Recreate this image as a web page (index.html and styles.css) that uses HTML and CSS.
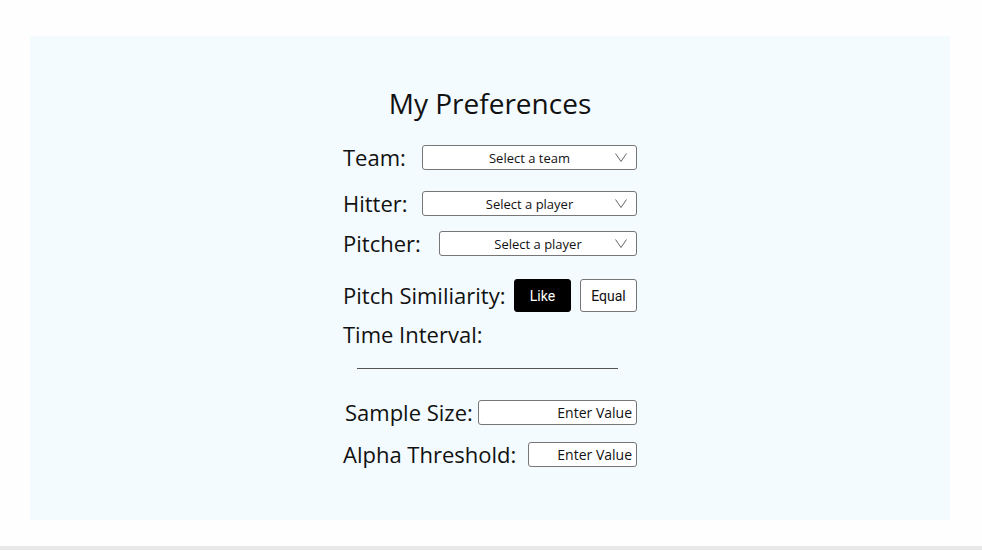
FILE: index.html
```html
<!DOCTYPE html>
<html>
<head>
<meta charset="utf-8">
<link rel="stylesheet" href="styles.css">
</head>
<body>
<div class="panel">
  <div class="form">
    <h1 class="title">My Preferences</h1>
    <div class="row row-team">
      <span class="label">Team:</span>
      <div class="select w-team"><span class="select-text">Select a team</span><svg class="chev" width="12" height="9" viewBox="0 0 12 9"><path d="M0.5 0.5 L6 8.5 L11.5 0.5" fill="none" stroke="#666" stroke-width="1"/></svg></div>
    </div>
    <div class="row row-hitter">
      <span class="label">Hitter:</span>
      <div class="select w-team"><span class="select-text">Select a player</span><svg class="chev" width="12" height="9" viewBox="0 0 12 9"><path d="M0.5 0.5 L6 8.5 L11.5 0.5" fill="none" stroke="#666" stroke-width="1"/></svg></div>
    </div>
    <div class="row row-pitcher">
      <span class="label">Pitcher:</span>
      <div class="select w-pitcher"><span class="select-text">Select a player</span><svg class="chev" width="12" height="9" viewBox="0 0 12 9"><path d="M0.5 0.5 L6 8.5 L11.5 0.5" fill="none" stroke="#666" stroke-width="1"/></svg></div>
    </div>
    <div class="row row-sim">
      <span class="label">Pitch Similiarity:</span>
      <div class="btns">
        <button class="btn btn-on">Like</button>
        <button class="btn">Equal</button>
      </div>
    </div>
    <div class="row row-time">
      <span class="label">Time Interval:</span>
    </div>
    <div class="slider"></div>
    <div class="row row-sample">
      <span class="label label-sample">Sample Size:</span>
      <div class="input w-sample">Enter Value</div>
    </div>
    <div class="row row-alpha">
      <span class="label">Alpha Threshold:</span>
      <div class="input w-alpha">Enter Value</div>
    </div>
  </div>
</div>
<div class="bottom-bar"></div>
</body>
</html>
```
FILE: styles.css
```css
html, body {
  margin: 0;
  padding: 0;
  background: #fefefe;
}
body {
  font-family: "Open Sans", "Noto Sans", sans-serif;
  color: #111;
  height: 550px;
  overflow: hidden;
}
.panel {
  margin: 36px 32px 0 30px;
  height: 484px;
  background: #f3fbfe;
  display: flex;
  justify-content: center;
}
.form {
  width: 294px;
  display: flex;
  flex-direction: column;
}
.title {
  margin: 49px 0 0 0;
  height: 36px;
  line-height: 36px;
  font-size: 28px;
  font-weight: 400;
  text-align: center;
  color: #111;
}
.row {
  display: flex;
  align-items: center;
  justify-content: space-between;
}
.label {
  font-size: 22px;
  line-height: 26px;
  padding-bottom: 2px;
  color: #111;
}
.label-sample { margin-left: 2px; }
.row-team { margin-top: 24px; height: 25px; }
.row-hitter { margin-top: 21px; height: 25px; }
.row-pitcher { margin-top: 15px; height: 25px; }
.row-sim { margin-top: 23px; height: 33px; }
.row-time { margin-top: 10px; height: 26px; }
.row-sample { margin-top: 31px; height: 25px; }
.row-alpha { margin-top: 17px; height: 25px; }
.select, .input {
  box-sizing: border-box;
  height: 25px;
  border: 1px solid #767676;
  border-radius: 3px;
  background: #fff;
  color: #111;
}
.select {
  position: relative;
  display: flex;
  align-items: center;
  justify-content: center;
  font-size: 13px;
}
.chev {
  position: absolute;
  right: 9px;
  top: 7px;
}
.w-team { width: 215px; }
.w-pitcher { width: 198px; }
.w-sample { width: 159px; }
.w-alpha { width: 109px; }
.input {
  display: flex;
  align-items: center;
  justify-content: flex-end;
  padding-right: 4px;
  font-size: 14px;
}
.btns {
  display: flex;
  gap: 9px;
}
.btn {
  box-sizing: border-box;
  width: 57px;
  height: 33px;
  border: 1px solid #767676;
  border-radius: 3px;
  background: #fff;
  color: #111;
  font-family: Roboto, "Liberation Sans", sans-serif;
  font-size: 14px;
  padding: 0;
}
.btn-on {
  background: #000;
  border-color: #000;
  color: #fff;
}
.slider {
  margin: 20px 0 0 14px;
  width: 261px;
  height: 1px;
  background: #555;
}
.bottom-bar {
  margin-top: 26px;
  height: 4px;
  background: #e8e8e8;
}
```
